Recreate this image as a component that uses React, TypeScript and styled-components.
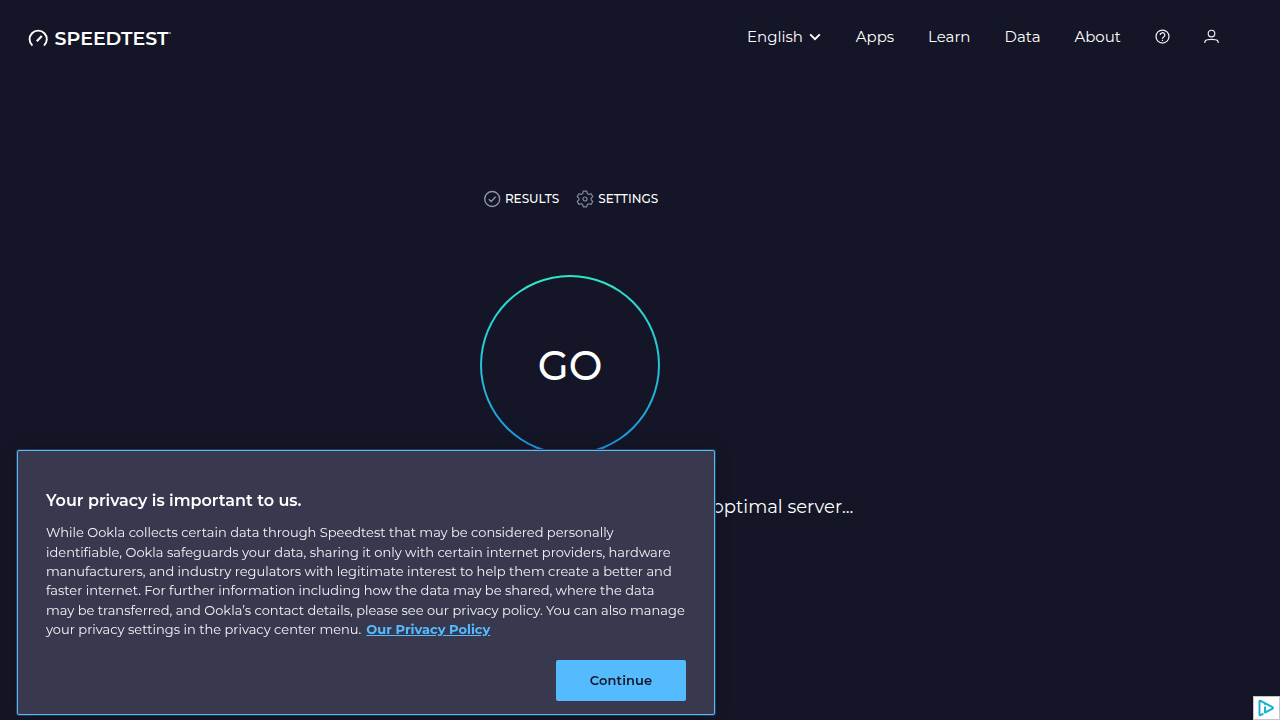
import React from "react";
import styled, { createGlobalStyle } from "styled-components";

const GlobalStyle = createGlobalStyle`
  * { box-sizing: border-box; }
  body {
    margin: 0;
    overflow: hidden;
    background: #141526;
    color: #fff;
    font-family: Montserrat, Inter, "Liberation Sans", sans-serif;
  }
`;

const Page = styled.div`
  height: 720px;
  overflow: hidden;
  background: #141526;
`;

const Header = styled.header`
  display: flex;
  justify-content: space-between;
  height: 74px;
  padding: 0 60px 0 28px;
`;

const Logo = styled.a`
  display: flex;
  align-items: flex-start;
  padding-top: 29px;
  height: 56px;
`;

const Wordmark = styled.span`
  margin: -1px 0 0 6.6px;
  font-size: 19px;
  line-height: 22px;
  font-weight: 600;
`;

const Mark = styled.span`
  margin: 3px 0 0 1px;
  width: 2px;
  height: 2px;
  background: #777886;
`;

const Nav = styled.nav`
  display: grid;
  grid-template-columns: 108.7px 72.3px 76.6px 69.8px 80.6px 49px 16px;
  align-items: center;
  height: 74px;
`;

const NavItem = styled.a`
  display: flex;
  align-items: center;
  gap: 6px;
  font-size: 15px;
  line-height: 20px;
  white-space: nowrap;
  color: #fff;
`;

const Main = styled.main`
  display: flex;
  flex-direction: column;
  align-items: center;
  width: 1140px;
  padding-top: 115px;
`;

const Tabs = styled.div`
  display: flex;
  gap: 17px;
  height: 20px;
  margin-left: 2px;
`;

const Tab = styled.a`
  display: flex;
  align-items: center;
  gap: 4px;
  font-size: 12px;
  font-weight: 500;
  line-height: 20px;
`;

const GoButton = styled.a`
  display: grid;
  place-items: center;
  width: 180px;
  height: 180px;
  margin-top: 66px;
  border-radius: 50%;
  border: 2px solid transparent;
  background:
    linear-gradient(#141526, #141526) padding-box,
    linear-gradient(#2fe6c8, #25c3dc 50%, #1d8fdc) border-box;
`;

const GoLabel = styled.span`
  font-size: 40px;
  font-weight: 500;
  line-height: 48px;
  padding-top: 1px;
`;

const Status = styled.p`
  align-self: flex-end;
  margin: 40px 286.6px 0 0;
  font-size: 18px;
  line-height: 24px;
`;

const Banner = styled.section`
  position: fixed;
  left: 17px;
  top: 450px;
  width: 698px;
  height: 265px;
  padding: 39px 28px 13px;
  border: 1px solid #55bbff;
  border-radius: 2px;
  background: #38394f;
  box-shadow: 0 0 18px rgba(0, 0, 0, 0.2), 0 0 0 1px #2b3f5a;
`;

const BannerTitle = styled.h2`
  margin: 0;
  font-size: 16px;
  line-height: 22px;
  font-weight: 600;
`;

const BannerText = styled.p`
  margin: 11.15px 0 0;
  font-size: 13.008px;
  line-height: 19.4px;
  color: #f3f4f8;
`;

const PolicyLink = styled.a`
  margin-left: 5px;
  font-weight: 700;
  color: #55bbff;
  text-decoration: underline;
`;

const Actions = styled.div`
  display: flex;
  justify-content: flex-end;
  margin-top: 20.45px;
`;

const Continue = styled.button`
  width: 130px;
  height: 41px;
  padding: 0 0 1px;
  border: 0;
  border-radius: 2px;
  background: #55bbff;
  color: #141526;
  font: inherit;
  font-size: 13.008px;
  font-weight: 600;
  letter-spacing: 0.1px;
`;

const AdChoices = styled.a`
  position: fixed;
  right: 0;
  bottom: 0;
  display: grid;
  place-items: center;
  width: 27px;
  height: 24px;
  border: 1px solid #c4c4c8;
  background: #fff;
`;

const GaugeIcon = () => (
  <svg width="20" height="20" viewBox="0 0 20 20" fill="none" stroke="#fff" strokeWidth="1.9">
    <path d="M4.4 16.6A8.6 8.6 0 1 1 16 16.6" />
    <path d="M8.8 12.2L13.8 7.1" strokeWidth="2.2" />
  </svg>
);

const ChevronIcon = () => (
  <svg width="12" height="8" viewBox="0 0 12 8" fill="none" stroke="#fff" strokeWidth="2">
    <path d="M1.2 1.4L6 6.1L10.8 1.4" />
  </svg>
);

const HelpIcon = () => (
  <svg width="16" height="16" viewBox="0 0 16 16" fill="none" stroke="#f0f1f6" strokeWidth="1.25">
    <circle cx="7.5" cy="7.5" r="6.5" />
    <path d="M5.2 6.1a2.3 2.3 0 1 1 3.5 1.9c-.8.5-1.2.8-1.2 1.6v.2M7.5 10.8v1.2" />
  </svg>
);

const UserIcon = () => (
  <svg width="16" height="16" viewBox="0 0 16 16" fill="none" stroke="#f0f1f6" strokeWidth="1.15">
    <circle cx="7.5" cy="4.5" r="3.3" />
    <path d="M.8 14v-.5c0-1.6 1-2.5 2.5-2.7 2.8-.5 5.6-.5 8.4 0 1.5.2 2.5 1.1 2.5 2.7v.5" />
  </svg>
);

const CheckIcon = () => (
  <svg width="17" height="18" viewBox="0 0 17 18" fill="none" stroke="#9193a8" strokeWidth="1.4">
    <circle cx="8.2" cy="9" r="7.5" />
    <path d="M4.8 9.2L7.2 11.500L11.700 6.700" />
  </svg>
);

const GearIcon = () => (
  <svg width="18" height="18" viewBox="0 0 18 18" fill="none" stroke="#85879c" strokeWidth="1.2" strokeLinejoin="round">
    <path d="M7.3 1.2h3.4l.6 2.3 1.5.9 2.3-.7 1.7 2.9-1.7 1.6v1.7l1.7 1.6-1.7 2.9-2.3-.7-1.5.9-.6 2.2H7.3l-.6-2.2-1.5-.9-2.3.7-1.7-2.9 1.7-1.6V8.2L1.2 6.6l1.7-2.9 2.3.7 1.5-.9z" />
    <circle cx="9" cy="9" r="2" />
  </svg>
);

const AdIcon = () => (
  <svg width="17" height="18" viewBox="0 0 17 18" fill="none" stroke="#10b2cf" strokeWidth="1.9" strokeLinejoin="round">
    <path d="M5.5 14.6L2.5 16.2Q1.5 16.6 1.5 15.5V2.5Q1.5 1.4 2.5 1.9L14.5 8.2Q15.6 8.9 14.5 9.6L7 13.6V7.5" />
    <path d="M7 4v1.8" />
  </svg>
);

export default function App() {
  return (
    <Page>
      <GlobalStyle />
      <Header>
        <Logo>
          <GaugeIcon />
          <Wordmark>SPEEDTEST</Wordmark>
          <Mark />
        </Logo>
        <Nav>
          <NavItem>English <ChevronIcon /></NavItem>
          <NavItem>Apps</NavItem>
          <NavItem>Learn</NavItem>
          <NavItem>Data</NavItem>
          <NavItem>About</NavItem>
          <NavItem><HelpIcon /></NavItem>
          <NavItem><UserIcon /></NavItem>
        </Nav>
      </Header>
      <Main>
        <Tabs>
          <Tab><CheckIcon />RESULTS</Tab>
          <Tab><GearIcon />SETTINGS</Tab>
        </Tabs>
        <GoButton>
          <GoLabel>GO</GoLabel>
        </GoButton>
        <Status>Finding optimal server...</Status>
      </Main>
      <Banner>
        <BannerTitle>Your privacy is important to us.</BannerTitle>
        <BannerText>
          While Ookla collects certain data through Speedtest that may be considered personally
          identifiable, Ookla safeguards your data, sharing it only with certain internet providers,
          hardware manufacturers, and industry regulators with legitimate interest to help them
          create a better and faster internet. For further information including how the data may be
          shared, where the data may be transferred, and Ookla’s contact details, please see our
          privacy policy. You can also manage your privacy settings in the privacy center menu.
          <PolicyLink>Our Privacy Policy</PolicyLink>
        </BannerText>
        <Actions>
          <Continue>Continue</Continue>
        </Actions>
      </Banner>
      <AdChoices>
        <AdIcon />
      </AdChoices>
    </Page>
  );
}
